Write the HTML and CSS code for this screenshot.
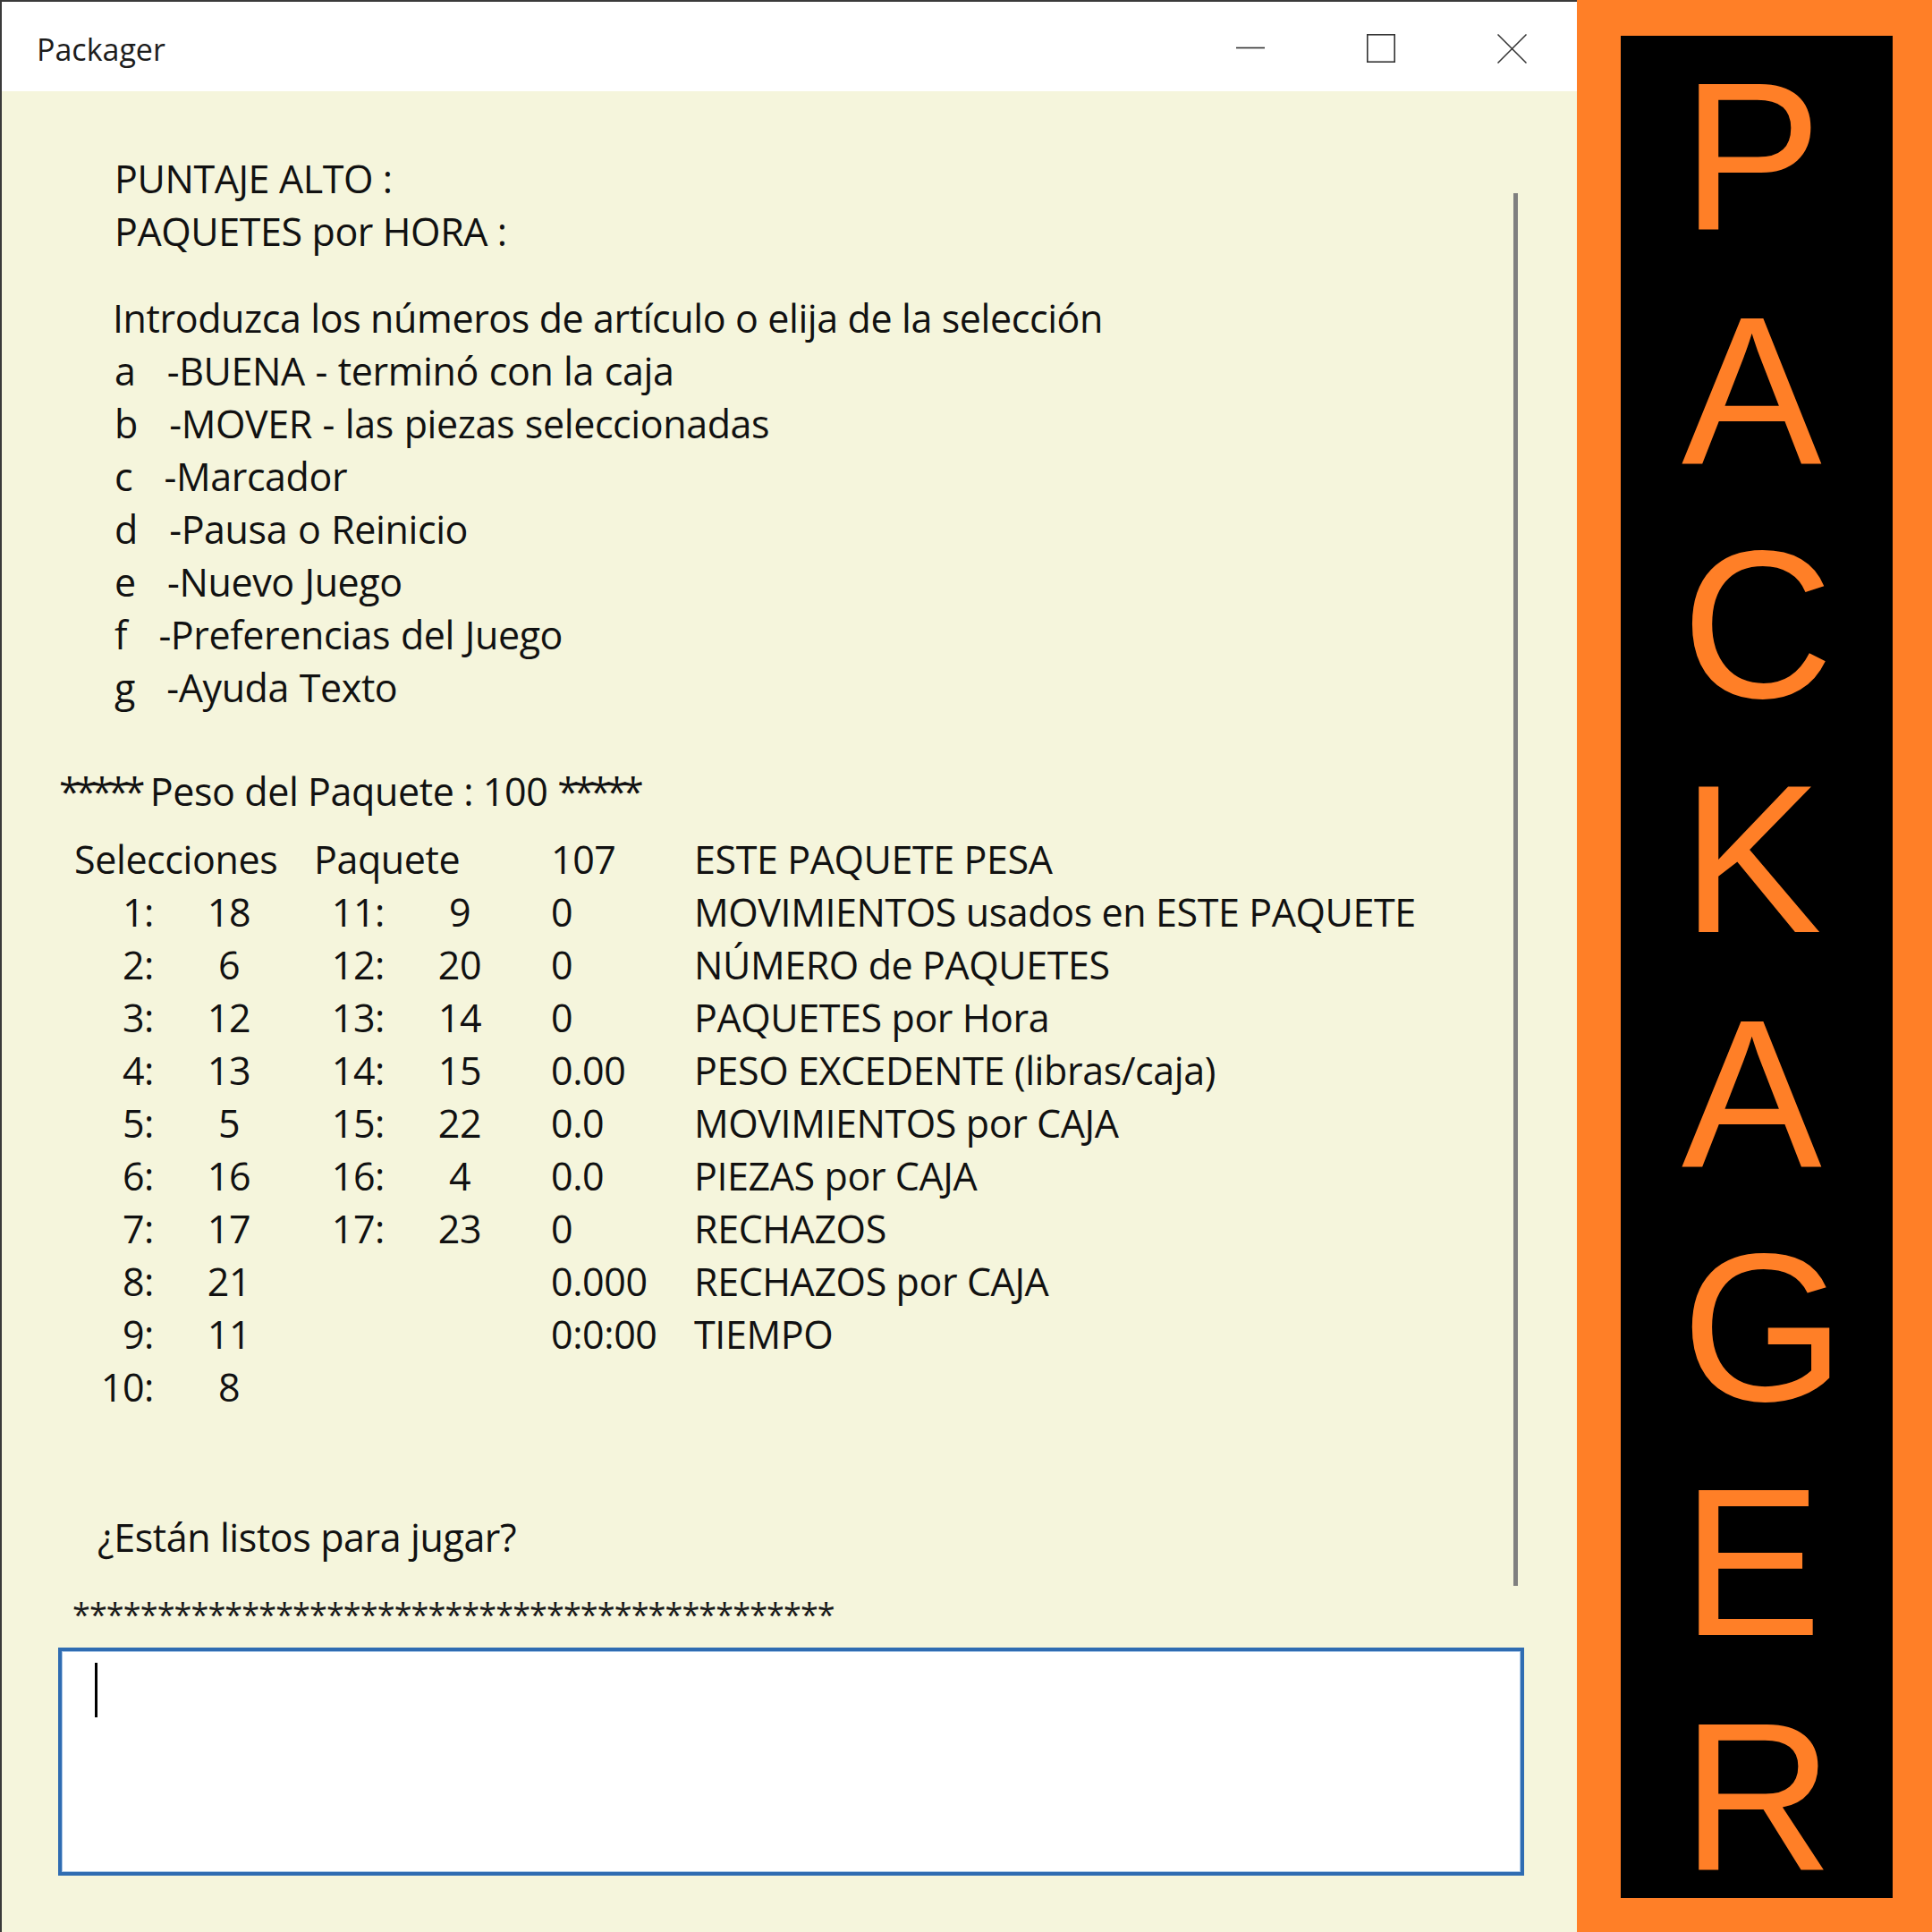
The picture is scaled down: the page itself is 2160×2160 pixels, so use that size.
FILE: index.html
```html
<!DOCTYPE html>
<html lang="es">
<head>
<meta charset="utf-8">
<title>Packager</title>
<link rel="stylesheet" href="styles.css">
</head>
<body>
<div class="screen">
  <div class="window">
    <header class="titlebar">
      <span class="title">Packager</span>
      <div class="controls">
        <div class="ctl">
          <svg width="33" height="33" viewBox="0 0 33 33"><line x1="0" y1="15.5" x2="32" y2="15.5" stroke="#333" stroke-width="1.6"/></svg>
        </div>
        <div class="ctl">
          <svg width="33" height="33" viewBox="0 0 33 33"><rect x="0.8" y="0.8" width="30.4" height="30.4" fill="none" stroke="#333" stroke-width="1.6"/></svg>
        </div>
        <div class="ctl">
          <svg width="33" height="33" viewBox="0 0 33 33"><path d="M0.5 0.5 L32.5 32.5 M32.5 0.5 L0.5 32.5" stroke="#333" stroke-width="1.5" fill="none"/></svg>
        </div>
      </div>
    </header>
    <main class="client">
      <div class="scrollarea">
        <div class="content">
          <section class="stats">
            <p>PUNTAJE ALTO :</p>
            <p>PAQUETES por HORA :</p>
          </section>
          <section class="menu">
            <p class="intro">Introduzca los números de artículo o elija de la selección</p>
            <p class="item">a   -BUENA - terminó con la caja</p>
            <p class="item">b   -MOVER - las piezas seleccionadas</p>
            <p class="item">c   -Marcador</p>
            <p class="item">d   -Pausa o Reinicio</p>
            <p class="item">e   -Nuevo Juego</p>
            <p class="item">f   -Preferencias del Juego</p>
            <p class="item">g   -Ayuda Texto</p>
          </section>
          <p class="peso"><span class="ast">*****</span> Peso del Paquete : 100 <span class="ast">*****</span></p>
          <div class="table">
            <span class="h1">Selecciones</span><span class="h2">Paquete</span><span class="c5">107</span><span class="c6">ESTE PAQUETE PESA</span>
            <span class="c1">1:</span><span class="c2">18</span><span class="c3">11:</span><span class="c4">9</span><span class="c5">0</span><span class="c6">MOVIMIENTOS usados en ESTE PAQUETE</span>
            <span class="c1">2:</span><span class="c2">6</span><span class="c3">12:</span><span class="c4">20</span><span class="c5">0</span><span class="c6">NÚMERO de PAQUETES</span>
            <span class="c1">3:</span><span class="c2">12</span><span class="c3">13:</span><span class="c4">14</span><span class="c5">0</span><span class="c6">PAQUETES por Hora</span>
            <span class="c1">4:</span><span class="c2">13</span><span class="c3">14:</span><span class="c4">15</span><span class="c5">0.00</span><span class="c6">PESO EXCEDENTE (libras/caja)</span>
            <span class="c1">5:</span><span class="c2">5</span><span class="c3">15:</span><span class="c4">22</span><span class="c5">0.0</span><span class="c6">MOVIMIENTOS por CAJA</span>
            <span class="c1">6:</span><span class="c2">16</span><span class="c3">16:</span><span class="c4">4</span><span class="c5">0.0</span><span class="c6">PIEZAS por CAJA</span>
            <span class="c1">7:</span><span class="c2">17</span><span class="c3">17:</span><span class="c4">23</span><span class="c5">0</span><span class="c6">RECHAZOS</span>
            <span class="c1">8:</span><span class="c2">21</span><span class="c3"></span><span class="c4"></span><span class="c5">0.000</span><span class="c6">RECHAZOS por CAJA</span>
            <span class="c1">9:</span><span class="c2">11</span><span class="c3"></span><span class="c4"></span><span class="c5">0:0:00</span><span class="c6">TIEMPO</span>
            <span class="c1">10:</span><span class="c2">8</span><span class="c3"></span><span class="c4"></span><span class="c5"></span><span class="c6"></span>
          </div>
          <p class="ready">¿Están listos para jugar?</p>
        </div>
        <div class="scrollbar"></div>
      </div>
      <p class="stars">*********************************************</p>
      <div class="input"><span class="caret"></span></div>
    </main>
  </div>
  <aside class="banner">
    <div class="logo">
      <span>P</span><span>A</span><span>C</span><span>K</span><span>A</span><span>G</span><span>E</span><span>R</span>
    </div>
  </aside>
</div>
</body>
</html>
```
FILE: styles.css
```css
* { box-sizing: border-box; }
html, body { margin: 0; padding: 0; }
body {
  width: 2160px;
  height: 2160px;
  overflow: hidden;
  background: #F5F5DC;
  font-family: "Open Sans", "Noto Sans", sans-serif;
  color: #111;
}
p { margin: 0; }

.screen {
  display: flex;
  width: 2160px;
  height: 2160px;
}

.window {
  width: 1763px;
  height: 2160px;
  display: flex;
  flex-direction: column;
  border-top: 2px solid #3a3a3a;
  border-left: 2px solid #3a3a3a;
  background: #F5F5DC;
}

.titlebar {
  height: 100px;
  flex: none;
  background: #fff;
  display: flex;
  align-items: center;
  justify-content: space-between;
}
.title {
  font-size: 34px;
  line-height: 34px;
  color: #1c1c1c;
  padding-left: 39px;
  padding-top: 6px;
}
.controls {
  display: flex;
  height: 100%;
}
.ctl {
  width: 146px;
  height: 100%;
  display: flex;
  align-items: center;
  justify-content: center;
  padding-top: 4px;
}
.ctl svg { display: block; }

.client {
  flex: 1;
  display: flex;
  flex-direction: column;
}

.scrollarea {
  height: 1678px;
  flex: none;
  display: flex;
  overflow: hidden;
}
.content {
  flex: 1;
  padding-top: 68px;
  font-size: 43px;
  line-height: 59px;
  letter-spacing: -0.4px;
}
.scrollbar {
  width: 5px;
  height: 1557px;
  margin-top: 114px;
  margin-right: 66px;
  background: #7f7f7f;
}

.stats { padding-left: 126px; }
.menu {
  margin-top: 38px;
  padding-left: 126px;
}
.menu p { white-space: pre; }
.menu .item { word-spacing: 1px; }
.menu .intro { margin-left: -2px; }

.peso {
  margin-top: 57px;
  padding-left: 64px;
}
.ast { letter-spacing: -5.5px; }

.table {
  margin-top: 17px;
  margin-left: 64px;
  display: grid;
  grid-template-columns: 110px 160px 94px 168px 178px 1fr;
  grid-auto-rows: 59px;
}
.table .h1 { grid-column: span 2; padding-left: 17px; }
.table .h2 { grid-column: span 2; padding-left: 15px; }
.c1 { text-align: right; padding-right: 4px; }
.c2 { text-align: center; }
.c3 { text-align: right; }
.c4 { text-align: center; }
.c5 { padding-left: 18px; }
.c6 { white-space: nowrap; }

.ready {
  margin-top: 109px;
  padding-left: 107px;
}

.stars {
  font-size: 36px;
  line-height: 50px;
  padding-left: 79px;
  letter-spacing: -0.9px;
  color: #1a1a1a;
}

.input {
  margin-top: 12px;
  margin-left: 63px;
  width: 1639px;
  height: 255px;
  background: #fff;
  border: 4px solid #2f6cb2;
  box-shadow: inset 0 0 0 1px #a9c6e6;
  padding-left: 37px;
  padding-top: 13px;
}
.caret {
  display: block;
  width: 3px;
  height: 61px;
  background: #000;
}

.banner {
  flex: 1;
  height: 2160px;
  background: #FF7F27;
  padding: 40px 44px 38px 49px;
  display: flex;
}
.logo {
  flex: 1;
  background: #000;
  padding-top: 35px;
  padding-left: 68px;
  display: flex;
  flex-direction: column;
  gap: 62px;
  font-family: "Liberation Sans", Arial, sans-serif;
  font-size: 235px;
  line-height: 200px;
  color: #FF7F27;
}
.logo span { display: block; height: 200px; flex: none; }
```
